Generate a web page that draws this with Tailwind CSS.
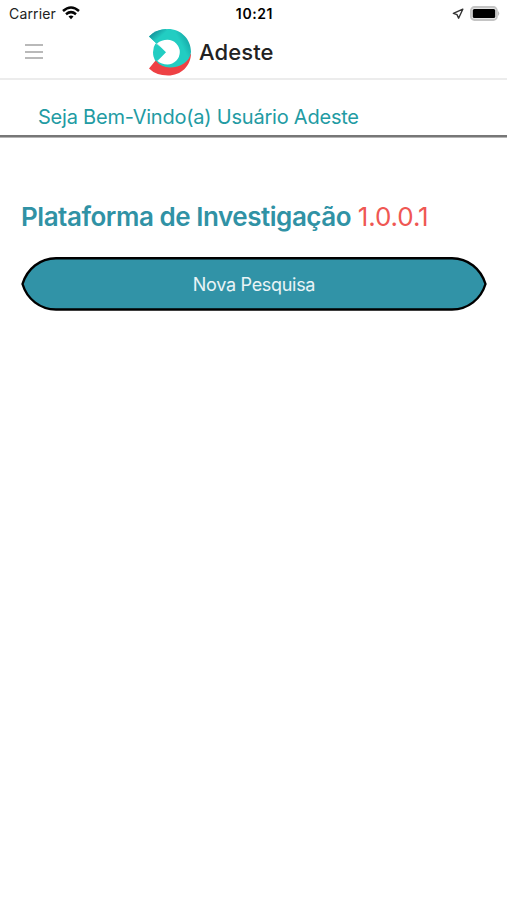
<!DOCTYPE html>
<html lang="pt">
<head>
  <meta charset="UTF-8" />
  <meta name="viewport" content="width=device-width, initial-scale=1.0" />
  <title>Adeste</title>
  <script src="https://cdn.jsdelivr.net/npm/@tailwindcss/browser@4"></script>
</head>
<body class="bg-white min-h-screen font-['Inter',sans-serif]">

  <!-- Status bar -->
  <div class="h-7 flex items-center justify-between pl-[9px] pr-[7px] text-[#222]">
    <div class="w-[160px] flex items-center gap-[6px]">
      <span class="text-[14px] leading-[28px] tracking-[0.15px] whitespace-nowrap">Carrier</span>
      <svg class="w-[18px] h-[14px] -mt-[2px]" viewBox="0 0 18 14" fill="none" stroke="#050505" stroke-width="2.5">
        <path d="M1 5 Q9 -2 17 5" />
        <path d="M4 8.2 Q9 4 14 8.2" />
        <path d="M6.5 10.5 Q9 8.4 11.5 10.5 L9 13.2 Z" fill="#050505" stroke="none" />
      </svg>
    </div>
    <span class="text-[14px] leading-[28px] tracking-[0.6px] font-semibold text-black">10:21</span>
    <div class="w-[160px] flex items-center justify-end gap-[5px]">
      <svg class="w-[12px] h-[12px]" viewBox="0 0 12 12" fill="none" stroke="#333" stroke-width="1.4" stroke-linejoin="round">
        <path d="M10.8 1.2 L1.4 5.4 L5 6.6 L6.6 10.2 Z" />
      </svg>
      <svg class="w-[31px] h-[15px] -mt-[2px]" viewBox="0 0 31 15">
        <rect x="1.9" y="1" width="26" height="13" rx="3.5" fill="#e4e4e4" stroke="#c4c4c4" stroke-width="1.8" />
        <rect x="3.8" y="3" width="22.4" height="9" rx="1.5" fill="#000" />
        <path d="M29 5 Q31.5 7.5 29 10 Z" fill="#bdbdbd" />
      </svg>
    </div>
  </div>

  <!-- Header -->
  <header class="h-[52px] flex items-start border-b-2 border-[#ececec] pl-[25px]">
    <button class="mt-[16px] w-[18px] h-[15px] flex flex-col justify-between" aria-label="Menu">
      <span class="block w-full h-[2px] bg-[#b9b9b9]"></span>
      <span class="block w-full h-[2px] bg-[#b9b9b9]"></span>
      <span class="block w-full h-[2px] bg-[#b9b9b9]"></span>
    </button>
    <div class="ml-[105px] flex items-start">
      <svg class="w-[44px] h-[48px]" viewBox="148 28 44 48">
        <defs>
          <linearGradient id="teal" x1="153" y1="31" x2="159" y2="38" gradientUnits="userSpaceOnUse">
            <stop offset="0" stop-color="#128a96" />
            <stop offset="1" stop-color="#22cdc2" />
          </linearGradient>
          <linearGradient id="edge" x1="183" y1="48" x2="191" y2="44" gradientUnits="userSpaceOnUse">
            <stop offset="0" stop-color="#22cdc2" />
            <stop offset="1" stop-color="#16a9a8" />
          </linearGradient>
        </defs>
        <path d="M149 68.5 L156 60 Q166 70 178 64 Q188 60 191 53 C191 66 181 75.5 168 75.5 Q156 75.5 149 68.5 Z" fill="#ee4144" />
        <path d="M149 36.5 Q156 29 168 29 C181 29 191 39 191 52 C190 62 180 67.5 170 67.5 Q161 67 156.5 61.5 L165 52 L156.5 43.5 Z" fill="url(#edge)" />
        <path d="M149 36.5 Q155 29.5 166 29 L174 39 L157 44 Z" fill="url(#teal)" />
        <path d="M155.5 43.5 Q153 47 153 52.3 Q153 58 156 61.5 L168 52 Z" fill="#22cdc2" />
        <path d="M157 43.5 Q161.5 39.8 167.5 39.8 A12.3 12.3 0 0 1 167.5 64.4 Q161.5 64.4 157.5 61 L166 52.3 Z" fill="#fff" />
      </svg>
      <span class="ml-[7px] mt-[9px] text-[22px] leading-[30px] font-medium tracking-[0.1px] text-[#222]">Adeste</span>
    </div>
  </header>

  <!-- Welcome -->
  <div class="h-[57px] border-b-2 border-[#777] shadow-[0_1px_0_#b5b5b5] pl-[38px] pt-[22px]">
    <p class="text-[20px] leading-[31px] tracking-[-0.22px] whitespace-nowrap text-[#229ba3]">Seja Bem-Vindo(a) Usuário Adeste</p>
  </div>

  <main class="px-[21px] pt-[62px]">
    <h1 class="text-[26px] leading-[36px] whitespace-nowrap font-semibold text-[#3092a5]"><span class="tracking-[-0.46px]">Plataforma de Investigação</span> <span class="font-normal tracking-[-0.1px] text-[#ef5753]">1.0.0.1</span></h1>

    <button class="relative block mt-[21px] w-[466px] h-[56px] text-white">
      <svg class="absolute inset-0 w-full h-full" viewBox="0 0 466 56">
        <path d="M35 2.2 H431 C447 2.2 460 13 464.5 28 C460 43 447 53.5 431 53.5 H35 C19 53.5 6 43 1.5 28 C6 13 19 2.2 35 2.2 Z" fill="#3193a7" stroke="#000" stroke-width="2.4" stroke-linejoin="round" />
      </svg>
      <span class="relative top-px text-[18px] leading-[56px] tracking-[-0.3px] text-white/90">Nova Pesquisa</span>
    </button>
  </main>

</body>
</html>
